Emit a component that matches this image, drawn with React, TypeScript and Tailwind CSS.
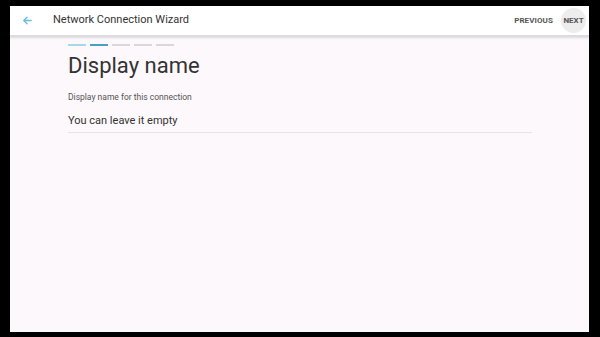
import React from "react";

export default function App() {
  return (
    <div className="w-[600px] h-[337px] bg-black pt-[6px] pl-[10px] pr-[11px] pb-[5px]" style={{ fontFamily: "Roboto, 'Noto Sans', sans-serif" }}>
      <div className="w-full h-full flex flex-col bg-[#fdf8fb]">
        <div className="h-[31px] shrink-0 bg-white flex items-center border-b-[2px] border-[#dcdcdc] shadow-[0_1px_2px_rgba(0,0,0,0.12)]">
          <div className="pl-[12px]">
            <svg width="11" height="11" viewBox="0 0 24 24" fill="none" stroke="#6bbbdc" strokeWidth="3" strokeLinecap="round" strokeLinejoin="round" className="block">
              <path d="M20 12H5" />
              <path d="M11 5l-7 7 7 7" />
            </svg>
          </div>
          <div className="ml-[20px] text-[11px] text-[#333]">Network Connection Wizard</div>
          <div className="flex-1" />
          <div className="text-[8px] font-bold text-[#555] tracking-[0.1px] mr-[8px]">PREVIOUS</div>
          <div className="mr-[3px] w-[25px] h-[25px] rounded-full bg-[#ededed] flex items-center justify-center">
            <span className="text-[8px] font-bold text-[#555]">NEXT</span>
          </div>
        </div>
        <div className="pl-[58px] pr-[57px] pt-[7px]">
          <div className="flex gap-[4px]">
            <div className="w-[18px] h-[2px] bg-[#a9d7e6]" />
            <div className="w-[18px] h-[2px] bg-[#4a9fc4]" />
            <div className="w-[18px] h-[2px] bg-[#d8d8d8]" />
            <div className="w-[18px] h-[2px] bg-[#d8d8d8]" />
            <div className="w-[18px] h-[2px] bg-[#d8d8d8]" />
          </div>
          <div className="mt-[5px] text-[22px] leading-[30px] text-[#333]">Display name</div>
          <div className="mt-[11px] text-[8.5px] leading-[11px] text-[#555]">Display name for this connection</div>
          <div className="mt-[10px] text-[11px] leading-[15px] text-[#333] pb-[4px] border-b border-[#e6e2e6]">You can leave it empty</div>
        </div>
      </div>
    </div>
  );
}
